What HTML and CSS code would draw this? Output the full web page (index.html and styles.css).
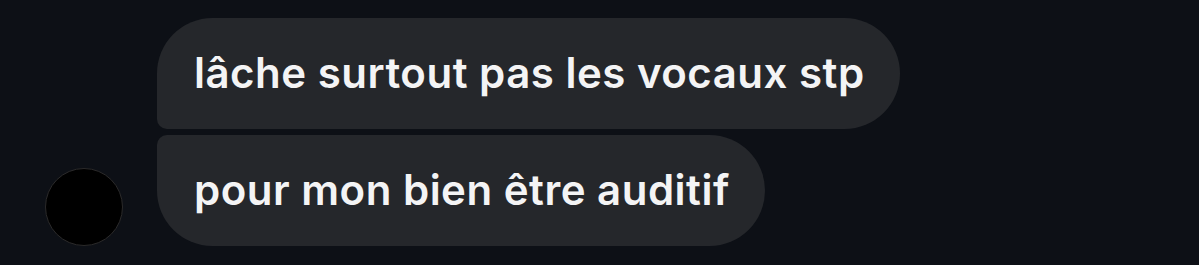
FILE: index.html
```html
<!DOCTYPE html>
<html lang="fr">
    <head>
        <meta charset="utf-8" />
        <link rel="stylesheet" href="styles.css">
    </head>
    <body>
        <div class="thread">
            <div class="avatar"></div>
            <div class="messages">
                <div class="bubble first">lâche surtout pas les vocaux stp</div>
                <div class="bubble last">pour mon bien être auditif</div>
            </div>
        </div>
    </body>
</html>
```
FILE: styles.css
```css
* {
    box-sizing: border-box;
}

body {
    margin: 0;
    background-color: #0d1016;
    font-family: 'Inter', 'Noto Sans', sans-serif;
}

.thread {
    display: flex;
    align-items: flex-end;
    gap: 34px;
    padding: 18px 0 0 45px;
}

.avatar {
    width: 78px;
    height: 78px;
    border-radius: 50%;
    background-color: #000000;
    border: 1px solid #2b2a2a;
    flex-shrink: 0;
}

.messages {
    display: flex;
    flex-direction: column;
    align-items: flex-start;
    gap: 6px;
}

.bubble {
    height: 111px;
    display: flex;
    align-items: center;
    padding: 0 35px 2px 37px;
    background-color: #25272b;
    color: #f4f4f5;
    font-size: 42px;
    font-weight: 600;
    letter-spacing: 0.5px;
    white-space: nowrap;
    border-radius: 56px;
}

.first {
    border-bottom-left-radius: 10px;
}

.last {
    border-top-left-radius: 10px;
}
```
